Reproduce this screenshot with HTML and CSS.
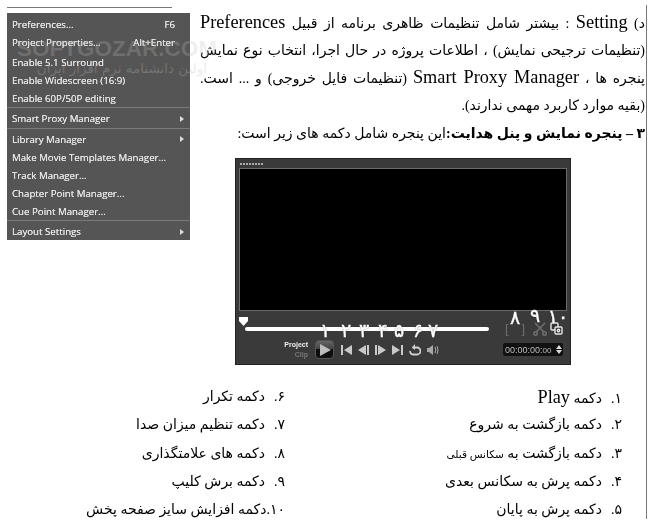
FILE: index.html
```html
<!DOCTYPE html>
<html lang="fa">
<head>
  <meta charset="UTF-8">
  <title>Setting</title>
  <link rel="stylesheet" href="styles.css">
</head>
<body>

<div class="page">
  <div class="rule-top"></div>
  <div class="rule-right"></div>

  <div class="top">
    <div class="menu" dir="ltr">
      <div class="item"><span>Preferences...</span><span class="key">F6</span></div>
      <div class="item"><span>Project Properties...</span><span class="key">Alt+Enter</span></div>
      <div class="item spaced"><span>Enable 5.1 Surround</span></div>
      <div class="item"><span>Enable Widescreen (16:9)</span></div>
      <div class="item"><span>Enable 60P/50P editing</span></div>
      <div class="sep"></div>
      <div class="item"><span>Smart Proxy Manager</span><span class="arrow"></span></div>
      <div class="sep"></div>
      <div class="item"><span>Library Manager</span><span class="arrow"></span></div>
      <div class="item"><span>Make Movie Templates Manager...</span></div>
      <div class="item"><span>Track Manager...</span></div>
      <div class="item"><span>Chapter Point Manager...</span></div>
      <div class="item"><span>Cue Point Manager...</span></div>
      <div class="sep"></div>
      <div class="item"><span>Layout Settings</span><span class="arrow"></span></div>
    </div>

    <div class="text" dir="rtl">
      <p class="line">د) <span class="latin">Setting</span> : بیشتر شامل تنظیمات ظاهری برنامه از قبیل <span class="latin">Preferences</span></p>
      <p class="line">(تنظیمات ترجیحی نمایش) ، اطلاعات پروژه در حال اجرا، انتخاب نوع نمایش</p>
      <p class="line">پنجره ها ، <span class="latin">Smart Proxy Manager</span> (تنظیمات فایل خروجی) و ... است.</p>
      <p class="line short">(بقیه موارد کاربرد مهمی ندارند).</p>
      <p class="line short"><b>۳ – پنجره نمایش و پنل هدایت:</b>این پنجره شامل دکمه های زیر است:</p>
    </div>
  </div>

  <div class="player">
    <div class="grip">
      <i></i><i></i><i></i><i></i><i></i><i></i><i></i><i></i>
    </div>
    <div class="screen"></div>
    <div class="panel">
      <div class="timeline">
        <div class="track"></div>
        <div class="clip-tools">
          <span class="brackets"><span>[</span><span>]</span></span>
          <svg class="cut" width="14" height="14" viewBox="0 0 14 14" fill="none" stroke="#6e6e6e" stroke-width="1.6">
            <path d="M2 1l9 9M12 1l-9 9"/>
            <circle cx="2.500" cy="11.500" r="1.700"/>
            <circle cx="11.500" cy="11.500" r="1.700"/>
          </svg>
          <svg width="13" height="13" viewBox="0 0 13 13" fill="#333" stroke="#e8e8e8" stroke-width="1.400">
            <rect x="1" y="1" width="7" height="7" rx="1"/>
            <rect x="5" y="5" width="7" height="7" rx="1"/>
            <circle cx="8.500" cy="8.500" r="1.200"/>
          </svg>
        </div>
      </div>
      <div class="controls">
        <div class="modes">
          <span class="project">Project</span>
          <span class="clip">Clip</span>
        </div>
        <button class="play">
          <svg width="12" height="12" viewBox="0 0 12 12"><path d="M1 0l11 6-11 6z" fill="#bdbdbd"/></svg>
        </button>
        <div class="transport">
          <svg width="11" height="10" viewBox="0 0 11 10" fill="#c8c8c8"><rect x="0" width="2" height="10"/><path d="M11 0v10L3 5z"/></svg>
          <svg width="11" height="10" viewBox="0 0 11 10" fill="#c8c8c8"><path d="M8 0v10L0 5z"/><rect x="9" width="2" height="10"/></svg>
          <svg width="11" height="10" viewBox="0 0 11 10" fill="#c8c8c8"><rect x="0" width="2" height="10"/><path d="M3 0v10l8-5z"/></svg>
          <svg width="11" height="10" viewBox="0 0 11 10" fill="#c8c8c8"><path d="M0 0v10l8-5z"/><rect x="9" width="2" height="10"/></svg>
          <svg width="12" height="12" viewBox="0 0 12 12" fill="none" stroke="#d0d0d0" stroke-width="1.800"><path d="M3.500 3.500H8a3 3 0 0 1 0 7H4a3 3 0 0 1-2.800-3.500"/><path d="M6 0v6L3 3.500z" fill="#d0d0d0" stroke="none"/></svg>
          <svg width="12" height="10" viewBox="0 0 12 10" fill="#a8a8a8"><path d="M0 3h2l4-3v10L2 7H0z"/><path d="M8 2q1.500 3 0 6M10 1q2 4 0 8" fill="none" stroke="#a8a8a8"/></svg>
        </div>
        <div class="timecode">
          <span>00:00:00:<small>00</small></span>
          <span class="spin"><i class="up"></i><i class="down"></i></span>
        </div>
      </div>
    </div>

    <span class="handle"></span>
    <span class="num n1">۱</span>
    <span class="num n2">۲</span>
    <span class="num n3">۳</span>
    <span class="num n4">۴</span>
    <span class="num n5">۵</span>
    <span class="num n6">۶</span>
    <span class="num n7">۷</span>
    <span class="num n8">۸</span>
    <span class="num n9">۹</span>
    <span class="num n10">۱۰</span>
  </div>

  <div class="lists">
    <ul class="list list-left" dir="rtl">
      <li><span class="mark">۶.</span>دکمه تکرار</li>
      <li><span class="mark">۷.</span>دکمه تنظیم میزان صدا</li>
      <li><span class="mark">۸.</span>دکمه های علامتگذاری</li>
      <li><span class="mark">۹.</span>دکمه برش کلیپ</li>
      <li><span class="mark tight">۱۰.</span>دکمه افزایش سایز صفحه پخش</li>
    </ul>
    <ul class="list list-right" dir="rtl">
      <li><span class="mark">۱.</span>دکمه <span class="latin">Play</span></li>
      <li><span class="mark">۲.</span>دکمه بازگشت به شروع</li>
      <li><span class="mark">۳.</span>دکمه بازگشت به <small>سکانس قبلی</small></li>
      <li><span class="mark">۴.</span>دکمه پرش به سکانس بعدی</li>
      <li><span class="mark">۵.</span>دکمه پرش به پایان</li>
    </ul>
  </div>

  <div class="watermark" dir="ltr">
    <div class="wm-name">SOFTGOZAR.COM</div>
    <div class="wm-tag" dir="rtl">اولین دانشنامه نرم افزار ایران</div>
  </div>
</div>

</body>
</html>
```

FILE: styles.css
```css
body {
  margin: 0;
  background: #fff;
  color: #000;
  font-family: "Liberation Serif", "DejaVu Sans", serif;
}

.page {
  position: relative;
  width: 650px;
  height: 530px;
  overflow: hidden;
}

.rule-top {
  position: absolute;
  left: 7px;
  top: 7px;
  width: 165px;
  height: 1px;
  background: #777;
}

.rule-right {
  position: absolute;
  left: 646px;
  top: 5px;
  width: 1px;
  height: 514px;
  background: #777;
}

.top {
  display: flex;
  align-items: flex-start;
  padding-left: 7px;
  height: 158px;
}

/* menu */
.menu {
  flex: none;
  width: 183px;
  height: 227px;
  margin-top: 13px;
  padding-top: 2px;
  box-sizing: border-box;
  background: #555;
  color: #e6e6e6;
  font-family: "Open Sans", sans-serif;
  font-size: 9.700px;
  text-shadow: 0 0 0.500px #e6e6e6;
  filter: blur(0.350px);
  position: relative;
  z-index: 1;
}

.item {
  display: flex;
  justify-content: space-between;
  align-items: center;
  height: 18px;
  padding: 0 6px 0 5px;
}

.item.spaced {
  margin-top: 2px;
}

.key {
  padding-right: 9px;
}

.arrow {
  width: 0;
  height: 0;
  border-left: 4px solid #ddd;
  border-top: 3px solid transparent;
  border-bottom: 3px solid transparent;
}

.sep {
  height: 1px;
  margin-bottom: 1.500px;
  background: #7a7a7a;
}

/* paragraph */
.text {
  flex: none;
  width: 445px;
  margin: 9px 0 0 10px;
  font-size: 14px;
  filter: blur(0.250px);
}

.line {
  margin: 0;
  height: 27.700px;
  line-height: 27.700px;
  white-space: nowrap;
  text-align: justify;
  text-align-last: justify;
}

.line.short {
  text-align-last: right;
}

.latin {
  font-size: 18.300px;
}

/* player */
.player {
  position: relative;
  box-sizing: border-box;
  width: 336px;
  height: 207px;
  margin-left: 235px;
  padding: 0 3px;
  background: #3a3a3a;
  border: 1px solid #222;
  filter: blur(0.300px);
}

.grip {
  display: flex;
  gap: 1px;
  align-items: center;
  height: 9px;
  padding-left: 1px;
}

.grip i {
  width: 2px;
  height: 2px;
  background: #aaa;
}

.screen {
  height: 143px;
  background: #000;
  border: 1px solid #6a6a6a;
  box-sizing: border-box;
}

.timeline {
  display: flex;
  align-items: center;
  height: 32px;
  padding-top: 3px;
  box-sizing: border-box;
}

.track {
  flex: none;
  width: 244px;
  height: 4px;
  margin-left: 6px;
  background: #fff;
  border-radius: 2px;
}

.clip-tools {
  display: flex;
  align-items: center;
  margin-left: 16px;
}

.brackets {
  display: flex;
  justify-content: space-between;
  width: 20px;
  margin-right: 8px;
  color: #6e6e6e;
  font: 13px "Liberation Sans", sans-serif;
}

.clip-tools svg {
  flex: none;
}

.clip-tools .cut {
  margin-right: 3px;
}

.controls {
  display: flex;
  align-items: center;
  height: 19px;
  margin-top: -3px;
}

.modes {
  display: flex;
  flex-direction: column;
  align-items: flex-end;
  width: 69px;
  font: bold 7px "Liberation Sans", sans-serif;
  line-height: 10px;
}

.project {
  color: #eee;
}

.clip {
  color: #777;
}

.play {
  display: flex;
  align-items: center;
  justify-content: center;
  width: 19px;
  height: 19px;
  margin-left: 7px;
  padding: 0;
  background: linear-gradient(#666 0%, #444 45%, #0c0c0c 50%, #111 100%);
  border: 1px solid #555;
  border-radius: 4px;
}

.transport {
  display: flex;
  align-items: center;
  gap: 6px;
  margin-left: 7px;
}

.timecode {
  display: flex;
  align-items: center;
  justify-content: space-between;
  box-sizing: border-box;
  width: 60px;
  height: 13px;
  margin-left: auto;
  margin-right: 4px;
  padding: 0 1px 0 2px;
  background: #111;
  border-radius: 2px;
  color: #bbb;
  font: 9px "Liberation Sans", sans-serif;
  white-space: nowrap;
}

.timecode small {
  font-size: 8px;
}

.spin {
  display: flex;
  flex-direction: column;
  gap: 1px;
}

.spin i {
  width: 0;
  height: 0;
  border-left: 3px solid transparent;
  border-right: 3px solid transparent;
}

.spin .up {
  border-bottom: 4px solid #ddd;
}

.spin .down {
  border-top: 4px solid #ddd;
}

.handle {
  position: absolute;
  left: 3px;
  top: 158px;
  width: 9px;
  height: 9px;
  background: #fff;
  clip-path: polygon(0 0, 100% 0, 100% 45%, 50% 100%, 0 45%);
}

.num {
  position: absolute;
  transform: translateX(-50%);
  color: #fff;
  font: 19px/20px "DejaVu Sans", sans-serif;
  -webkit-text-stroke: 0.400px #fff;
  text-shadow: 0 0 1px #000;
}

.n1 { left: 89px; top: 161px; }
.n2 { left: 110px; top: 161px; }
.n3 { left: 128px; top: 161px; }
.n4 { left: 147px; top: 161px; }
.n5 { left: 163px; top: 161px; }
.n6 { left: 182px; top: 161px; }
.n7 { left: 197px; top: 161px; }
.n8 { left: 279px; top: 148px; }
.n9 { left: 299px; top: 146px; }
.n10 { left: 322px; top: 147px; letter-spacing: 3px; }

/* button lists */
.lists {
  display: grid;
  grid-template-columns: 285px 337px;
  margin-top: 18px;
}

.list {
  margin: 0;
  padding: 0;
  list-style: none;
  font-size: 14px;
  filter: blur(0.250px);
}

.list li {
  height: 28.250px;
  line-height: 28px;
  white-space: nowrap;
}

.mark {
  display: inline-block;
  min-width: 20px;
}

.mark.tight {
  min-width: 0;
}

.list small {
  font-size: 10.500px;
}

/* site watermark */
.watermark {
  position: absolute;
  left: 17px;
  top: 38px;
  width: 230px;
  pointer-events: none;
  z-index: 2;
}

.wm-name {
  color: rgba(190, 190, 190, 0.25);
  font: bold 22.500px/22px "Liberation Sans", sans-serif;
  white-space: nowrap;
}

.wm-tag {
  width: 190px;
  color: rgba(190, 190, 190, 0.3);
  font: 13.500px/16px "DejaVu Sans", sans-serif;
  white-space: nowrap;
}
```
